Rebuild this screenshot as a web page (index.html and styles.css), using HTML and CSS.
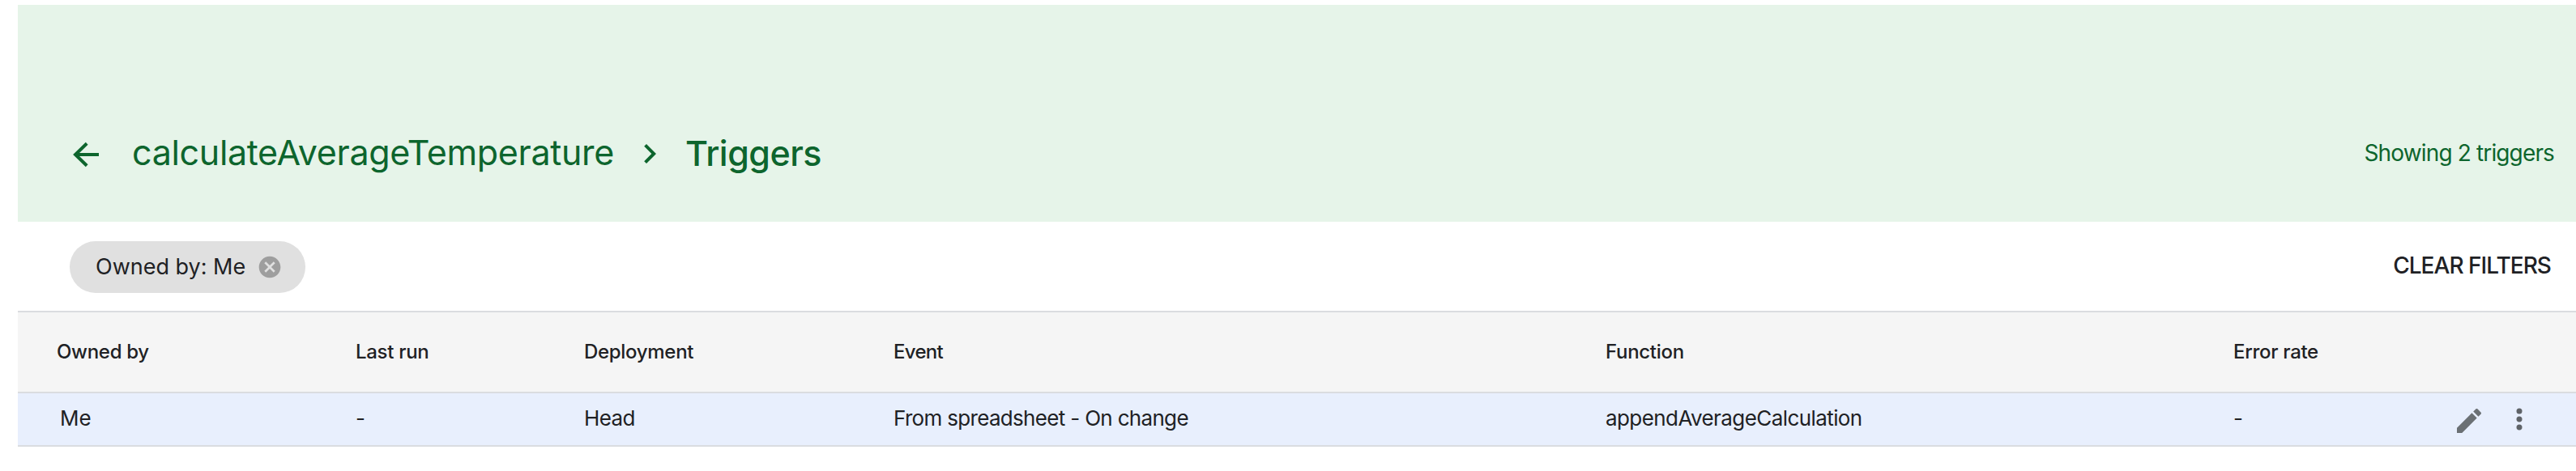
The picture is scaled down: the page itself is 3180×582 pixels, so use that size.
FILE: index.html
```html
<!DOCTYPE html>
<html lang="en">
<head>
<meta charset="utf-8">
<title>Triggers</title>
<link rel="stylesheet" href="styles.css">
</head>
<body>
<main class="page">
  <header class="banner">
    <svg class="back" viewBox="0 0 24 24"><path d="M20 12H6M12.6 5.1L5.5 12l7.1 6.9"/></svg>
    <span class="project">calculateAverageTemperature</span>
    <svg class="chevron" viewBox="0 0 24 24"><path d="M10 6L8.59 7.41 13.17 12l-4.58 4.59L10 18l6-6z"/></svg>
    <h1 class="title">Triggers</h1>
    <span class="count">Showing 2 triggers</span>
  </header>
  <section class="filters">
    <div class="chip">
      <span class="chip-label">Owned by: Me</span>
      <svg class="chip-remove" viewBox="0 0 24 24"><path d="M12 2C6.47 2 2 6.47 2 12s4.47 10 10 10 10-4.47 10-10S17.53 2 12 2zm5 13.59L15.59 17 12 13.41 8.41 17 7 15.59 10.59 12 7 8.41 8.41 7 12 10.59 15.59 7 17 8.41 13.41 12 17 15.59z"/></svg>
    </div>
    <span class="clear">CLEAR FILTERS</span>
  </section>
  <section class="table">
    <div class="row head">
      <span class="owner">Owned by</span>
      <span>Last run</span>
      <span class="deployment">Deployment</span>
      <span class="event">Event</span>
      <span>Function</span>
      <span>Error rate</span>
    </div>
    <div class="row entry">
      <span class="owner">Me</span>
      <span>-</span>
      <span>Head</span>
      <span class="event">From spreadsheet - On change</span>
      <span>appendAverageCalculation</span>
      <span>-</span>
      <div class="actions">
        <svg class="edit" viewBox="0 0 24 24"><path d="M3 17.25V21h3.75L17.81 9.94l-3.75-3.75L3 17.25zM20.71 7.04c.39-.39.39-1.02 0-1.41l-2.34-2.34c-.39-.39-1.02-.39-1.41 0l-1.83 1.83 3.75 3.75 1.83-1.83z"/></svg>
        <svg class="more" viewBox="0 0 24 24"><circle cx="12" cy="6" r="2.1"/><circle cx="12" cy="12" r="2.1"/><circle cx="12" cy="18" r="2.1"/></svg>
      </div>
    </div>
  </section>
</main>
</body>
</html>
```
FILE: styles.css
```css
* { box-sizing: border-box; }
body {
  margin: 0;
  background: #fff;
  color: #202124;
  font-family: Inter, Roboto, sans-serif;
}
svg { display: block; flex: none; }
.page { padding: 6px 0 0 22px; }

.banner {
  display: flex;
  align-items: flex-start;
  height: 268px;
  padding: 158px 27px 0 60px;
  background: #e6f4e9;
  color: #0d652d;
  line-height: 48px;
  white-space: nowrap;
}
.back, .chevron { width: 48px; height: 48px; fill: #0d652d; }
.back { margin-top: 3px; fill: none; stroke: #0d652d; stroke-width: 2; }
.chevron { margin: 2px 0 0 18px; }
.project { width: 597px; margin-left: 33px; font-size: 43px; letter-spacing: -0.33px; }
.title { margin: 1px 0 0 20px; font-size: 43px; font-weight: 500; letter-spacing: -0.5px; }
.count { margin: 1px 0 0 auto; font-size: 28px; letter-spacing: -0.86px; }

.filters {
  display: flex;
  align-items: center;
  justify-content: space-between;
  height: 110px;
  padding: 2px 31px 0 64px;
}
.chip {
  display: flex;
  align-items: center;
  width: 291px;
  height: 64px;
  padding-left: 32px;
  border-radius: 32px;
  background: #e0e0e0;
}
.chip-label { width: 199px; font-size: 27px; line-height: 34px; padding-bottom: 1px; white-space: nowrap; }
.chip-remove { width: 32px; height: 32px; fill: #9e9e9e; }
.clear { font-size: 28px; font-weight: 500; letter-spacing: -0.97px; padding-bottom: 4px; }

.table { border-top: 2px solid #dadce0; }
.row {
  display: grid;
  grid-template-columns: 417px 282px 382px 879px 775px 271px 1fr;
  align-items: center;
  border-bottom: 2px solid #dadce0;
  white-space: nowrap;
}
.head {
  height: 100px;
  padding-bottom: 2px;
  background: #f5f5f5;
  font-size: 24px;
  font-weight: 500;
  letter-spacing: -0.3px;
}
.head .owner { padding-left: 48px; }
.head .deployment { letter-spacing: -0.3px; }
.head .event { letter-spacing: -0.7px; }
.entry {
  height: 66px;
  background: #e8effd;
  font-size: 26px;
  letter-spacing: -0.58px;
}
.entry span { padding-bottom: 3px; }
.entry .owner { padding-left: 52px; letter-spacing: 0; }
.entry .event { letter-spacing: -0.68px; }
.actions { display: flex; gap: 22px; }
.edit, .more { width: 40px; height: 40px; }
.edit { margin-top: 4px; fill: #6b7074; }
.more { margin-top: 2px; fill: #5f6368; }
```
